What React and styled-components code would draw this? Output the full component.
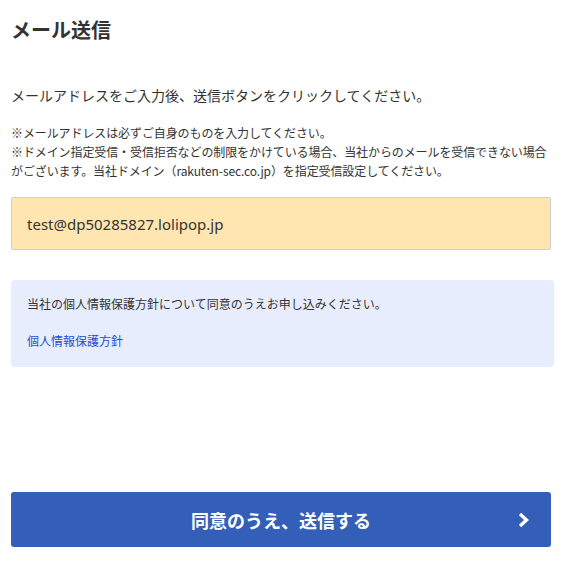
import React from 'react'
import styled, { createGlobalStyle } from 'styled-components'

const GlobalStyle = createGlobalStyle`
  html, body {
    margin: 0;
    padding: 0;
    background: #fff;
  }
  body {
    font-family: Meiryo, "Noto Sans CJK JP", "Noto Sans", sans-serif;
    color: #333;
  }
`

const Page = styled.main`
  width: 574px;
  box-sizing: border-box;
  padding: 15px 23px 0 11px;
`

const Title = styled.h1`
  margin: 0;
  font-size: 20px;
  line-height: 30px;
  font-weight: 700;
  color: #333;
`

const Lead = styled.p`
  margin: 40px 0 0;
  font-size: 14px;
  line-height: 20px;
`

const Notes = styled.p`
  margin: 18px 0 0;
  font-size: 12px;
  line-height: 19px;
  letter-spacing: -0.1px;
`

const MailBox = styled.div`
  margin-top: 17px;
  height: 53px;
  box-sizing: border-box;
  display: flex;
  align-items: center;
  padding: 0 15px;
  background: #ffe6b1;
  border: 1px solid #cfcfcf;
  border-radius: 2px;
  font-family: "Noto Sans", "Noto Sans CJK JP", sans-serif;
  font-size: 15px;
  color: #333;
`

const PolicyBox = styled.section`
  margin: 30px -3px 0 0;
  padding: 15px 16px 17px;
  background: #e8edfe;
  border-radius: 4px;
  font-size: 12px;
  line-height: 18px;
`

const PolicyText = styled.p`
  margin: 0;
`

const PolicyLink = styled.a`
  display: inline-block;
  margin-top: 19px;
  color: #1d4ed0;
  text-decoration: none;
`

const SubmitButton = styled.button`
  margin-top: 125px;
  width: 100%;
  height: 55px;
  position: relative;
  display: flex;
  align-items: center;
  justify-content: center;
  border: none;
  border-radius: 3px;
  background: #345fb8;
  color: #fff;
  font-family: Meiryo, "Noto Sans CJK JP", sans-serif;
  font-size: 18px;
  font-weight: 700;
  cursor: pointer;
`

const Chevron = styled.svg`
  position: absolute;
  right: 21px;
  top: 50%;
  transform: translateY(-50%);
`

export default function App() {
  return (
    <>
      <GlobalStyle />
      <Page>
        <Title>メール送信</Title>
        <Lead>メールアドレスをご入力後、送信ボタンをクリックしてください。</Lead>
        <Notes>
          ※メールアドレスは必ずご自身のものを入力してください。
          <br />
          ※ドメイン指定受信・受信拒否などの制限をかけている場合、当社からのメールを受信できない場合がございます。当社ドメイン（rakuten-sec.co.jp）を指定受信設定してください。
        </Notes>
        <MailBox>test@dp50285827.lolipop.jp</MailBox>
        <PolicyBox>
          <PolicyText>当社の個人情報保護方針について同意のうえお申し込みください。</PolicyText>
          <PolicyLink href="#">個人情報保護方針</PolicyLink>
        </PolicyBox>
        <SubmitButton type="button">
          同意のうえ、送信する
          <Chevron width="13" height="17" viewBox="0 0 13 17">
            <polyline
              points="3,2.5 9.5,8.5 3,14.5"
              fill="none"
              stroke="#fff"
              strokeWidth="3.4"
            />
          </Chevron>
        </SubmitButton>
      </Page>
    </>
  )
}
